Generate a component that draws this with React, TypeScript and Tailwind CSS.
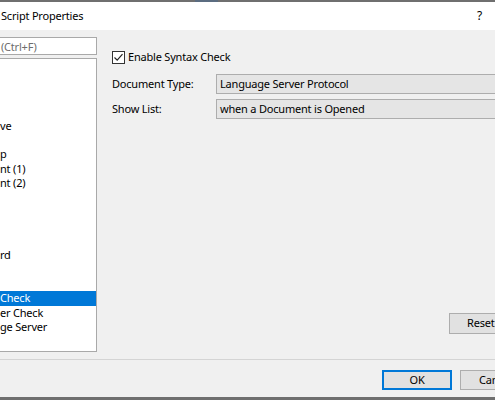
import React from "react";

const font = { fontFamily: '"Noto Sans", "Segoe UI", sans-serif' };

const items: { text: string; selected?: boolean }[] = [
  { text: "" }, { text: "" }, { text: "" }, { text: "" },
  { text: "ve" }, { text: "" }, { text: "p" }, { text: "nt (1)" }, { text: "nt (2)" },
  { text: "" }, { text: "" }, { text: "" }, { text: "" }, { text: "rd" },
  { text: "" }, { text: "" }, { text: "Check", selected: true },
  { text: "er Check" }, { text: "ge Server" },
];

export default function App() {
  return (
    <div className="w-[495px] h-[400px] flex flex-col overflow-hidden text-[11px] tracking-[-0.2px] text-black" style={font}>
      <div className="h-[2px] flex">
        <div className="w-[195px] bg-[#6f6f6f]" />
        <div className="w-[23px] bg-[#5b6c80]" />
        <div className="flex-1 bg-[#6f6f6f]" />
      </div>
      <div className="h-[28px] bg-white flex items-center justify-between">
        <span className="pl-[1px] text-[11px]">Script Properties</span>
        <span className="pr-[13px] text-[12px]">?</span>
      </div>
      <div className="flex-1 bg-[#f0f0f0] flex flex-col">
        <div className="h-[329px] flex">
          <div className="w-[97px] pt-[7px] flex flex-col gap-[3px]">
            <div className="h-[18px] bg-white border border-[#a9a9a9] border-l-0 flex items-center text-[#6d6d6d] leading-none">
              <span className="pl-[1px]">(Ctrl+F)</span>
            </div>
            <div className="h-[294px] bg-white border border-[#a9a9a9] border-l-0 pt-[2px]">
              {items.map((it, i) => (
                <div
                  key={i}
                  className={
                    "h-[14.4px] leading-[14.4px] whitespace-nowrap " +
                    (it.selected ? "bg-[#0078d7] text-white" : "")
                  }
                >
                  {it.text}
                </div>
              ))}
            </div>
          </div>
          <div className="flex-1 pl-[15px] pt-[21px] flex flex-col">
            <div className="flex items-center gap-[3px] h-[13px]">
              <div className="w-[13px] h-[13px] border border-[#333] bg-white flex items-center justify-center">
                <svg width="11" height="11" viewBox="0 0 11 11">
                  <path d="M1.5 5.5 L4.2 8.2 L9.5 2.2" fill="none" stroke="#222" strokeWidth="1.2" />
                </svg>
              </div>
              <span>Enable Syntax Check</span>
            </div>
            <div className="mt-[10px] flex flex-col gap-[5px]">
              <div className="flex items-center h-[20px]">
                <span className="w-[104px]">Document Type:</span>
                <div className="flex-1 h-[20px] bg-[#e5e5e5] border border-[#adadad] border-r-0 flex items-center pl-[3px]">
                  Language Server Protocol
                </div>
              </div>
              <div className="flex items-center h-[20px]">
                <span className="w-[104px]">Show List:</span>
                <div className="flex-1 h-[20px] bg-[#e5e5e5] border border-[#adadad] border-r-0 flex items-center pl-[3px]">
                  when a Document is Opened
                </div>
              </div>
            </div>
            <div className="flex-1" />
            <div className="flex justify-end mb-[25px]">
              <div className="w-[46px] h-[21px] bg-[#e1e1e1] border border-[#adadad] border-r-0 flex items-center pl-[17px]">
                Reset
              </div>
            </div>
          </div>
        </div>
        <div className="h-px bg-[#d4d4d4]" />
        <div className="flex justify-end pt-[10px] gap-[8px]">
          <div className="w-[70px] h-[20px] bg-[#e1e1e1] border-2 border-[#0078d7] flex items-center justify-center">
            OK
          </div>
          <div className="w-[35px] h-[20px] bg-[#e1e1e1] border border-[#adadad] border-r-0 flex items-center pl-[18px] whitespace-nowrap overflow-hidden">
            Cancel
          </div>
        </div>
        <div className="flex-1" />
        <div className="h-[3px] bg-[#6f6f6f]" />
      </div>
    </div>
  );
}
